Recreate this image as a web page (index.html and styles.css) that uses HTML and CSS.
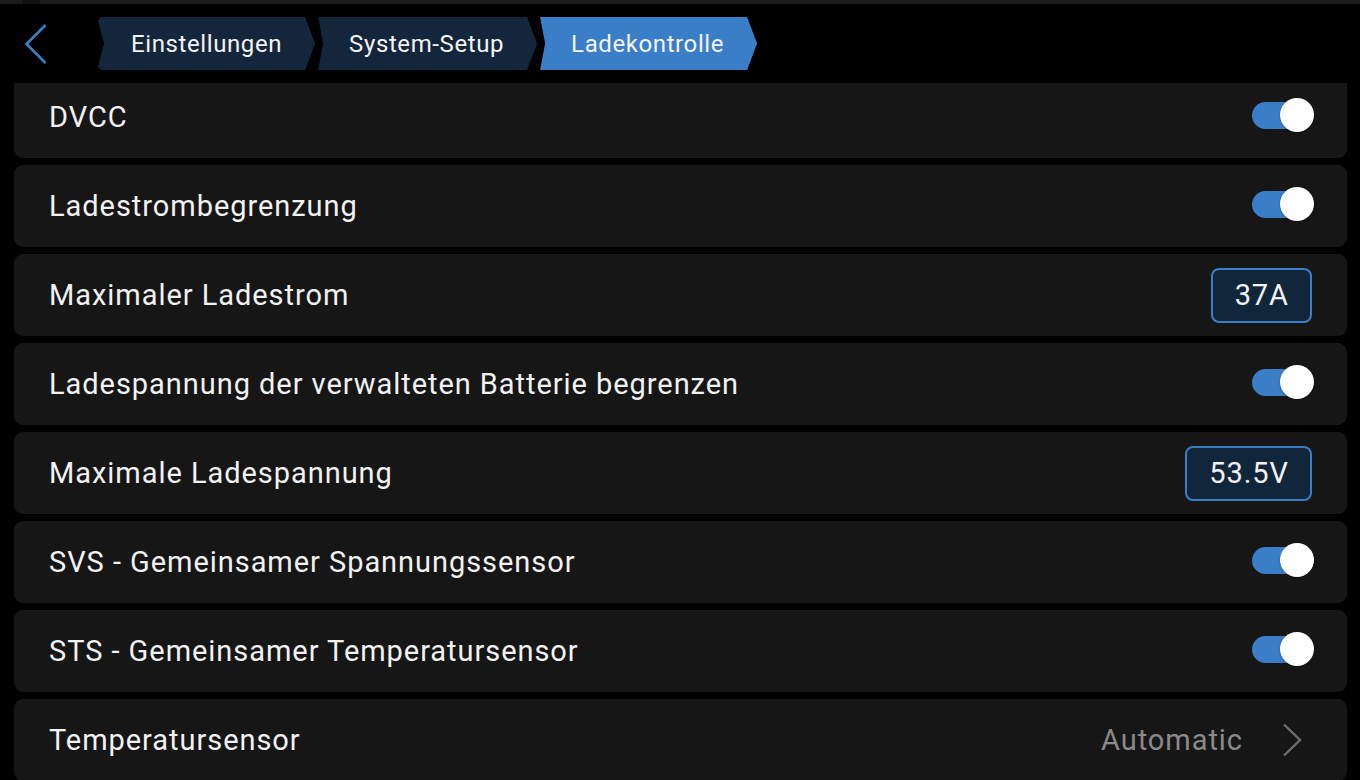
FILE: index.html
```html
<!DOCTYPE html>
<html lang="de">
<head>
<meta charset="utf-8">
<title>Ladekontrolle</title>
<link rel="stylesheet" href="styles.css">
</head>
<body>
<div class="app">
  <div class="topstrip"><span class="topstrip-dark"></span></div>
  <header class="nav">
    <svg class="back" width="28" height="46" viewBox="0 0 28 46" aria-label="Zurück">
      <path d="M23.5 4 L4.5 23 L23.5 42" fill="none" stroke="#3a7ec8" stroke-width="2.6" stroke-linejoin="miter"/>
    </svg>
    <nav class="crumbs">
      <span class="crumb crumb-first">Einstellungen</span>
      <span class="crumb">System-Setup</span>
      <span class="crumb crumb-active">Ladekontrolle</span>
    </nav>
  </header>
  <main class="viewport">
    <div class="list">
      <div class="row">
        <span class="label">DVCC</span>
        <span class="toggle"><span class="track"></span><span class="knob"></span></span>
      </div>
      <div class="row">
        <span class="label">Ladestrombegrenzung</span>
        <span class="toggle"><span class="track"></span><span class="knob"></span></span>
      </div>
      <div class="row">
        <span class="label">Maximaler Ladestrom</span>
        <span class="value">37A</span>
      </div>
      <div class="row">
        <span class="label">Ladespannung der verwalteten Batterie begrenzen</span>
        <span class="toggle"><span class="track"></span><span class="knob"></span></span>
      </div>
      <div class="row">
        <span class="label">Maximale Ladespannung</span>
        <span class="value">53.5V</span>
      </div>
      <div class="row">
        <span class="label">SVS - Gemeinsamer Spannungssensor</span>
        <span class="toggle"><span class="track"></span><span class="knob"></span></span>
      </div>
      <div class="row">
        <span class="label">STS - Gemeinsamer Temperatursensor</span>
        <span class="toggle"><span class="track"></span><span class="knob"></span></span>
      </div>
      <div class="row">
        <span class="label">Temperatursensor</span>
        <span class="nav-value">
          <span class="secondary">Automatic</span>
          <svg class="chev" width="20" height="34" viewBox="0 0 20 34">
            <path d="M2 1.5 L18 17 L2 32.5" fill="none" stroke="#6e6e6e" stroke-width="2.4"/>
          </svg>
        </span>
      </div>
    </div>
  </main>
</div>
</body>
</html>
```
FILE: styles.css
```css
* { box-sizing: border-box; }

html, body {
  margin: 0;
  padding: 0;
  background: #000;
  overflow: hidden;
}

body {
  font-family: Roboto, "Noto Sans", "Liberation Sans", sans-serif;
  color: #f2f2f2;
}

.app {
  width: 1360px;
  height: 780px;
  display: flex;
  flex-direction: column;
  overflow: hidden;
}

.topstrip {
  height: 4px;
  background: #1b1b1b;
  display: flex;
  flex-shrink: 0;
}

.topstrip-dark {
  width: 17px;
  margin-left: 23px;
  background: #101010;
}

.nav {
  height: 79px;
  flex-shrink: 0;
  display: flex;
  align-items: center;
}

.back {
  margin-left: 22px;
  display: block;
}

.crumbs {
  display: flex;
  align-items: center;
  margin-left: 48px;
}

.crumb {
  height: 53px;
  display: flex;
  align-items: center;
  justify-content: center;
  padding: 0 33px 0 33px;
  font-size: 24px;
  letter-spacing: 0.6px;
  color: #f4f4f4;
  background: #13263b;
  clip-path: polygon(2px 0, calc(100% - 10px) 0, 100% 50%, calc(100% - 10px) 100%, 2px 100%, 7px 50%);
  margin-right: 1px;
}

.crumb-first {
  clip-path: polygon(3px 0, calc(100% - 10px) 0, 100% 50%, calc(100% - 10px) 100%, 3px 100%, 0 94%, 6px 50%, 0 6%);
}

.crumb-active {
  background: #3a7ec8;
}

.viewport {
  flex: 1;
  overflow: hidden;
  padding: 0 13px 0 14px;
}

.list {
  margin-top: -7px;
  display: flex;
  flex-direction: column;
  gap: 7px;
}

.row {
  height: 82px;
  flex-shrink: 0;
  background: #161616;
  border-radius: 9px;
  display: flex;
  align-items: center;
  justify-content: space-between;
  padding: 0 33px 0 35px;
}

.label {
  font-size: 29px;
  letter-spacing: 0.95px;
  color: #f2f2f2;
}

.toggle {
  position: relative;
  width: 62px;
  height: 34px;
  margin-bottom: 4px;
}

.track {
  position: absolute;
  left: 0;
  top: 3.5px;
  width: 58px;
  height: 27px;
  border-radius: 14px;
  background: #3a7ec8;
}

.knob {
  position: absolute;
  right: 0;
  top: 0;
  width: 34px;
  height: 34px;
  border-radius: 50%;
  background: #fff;
  box-shadow: 0 1px 2px rgba(0, 0, 0, 0.35);
}

.value {
  height: 55px;
  display: flex;
  align-items: center;
  padding: 0 21px 0 22px;
  border: 2px solid #3a7ec8;
  border-radius: 8px;
  background: #12263b;
  font-size: 29px;
  letter-spacing: 0.95px;
  color: #f2f2f2;
  margin-right: 2px;
}

.nav-value {
  display: flex;
  align-items: center;
  gap: 39px;
  margin-right: 12px;
}

.secondary {
  font-size: 29px;
  letter-spacing: 0.95px;
  color: #8a8a8a;
}

.chev {
  display: block;
}
```
